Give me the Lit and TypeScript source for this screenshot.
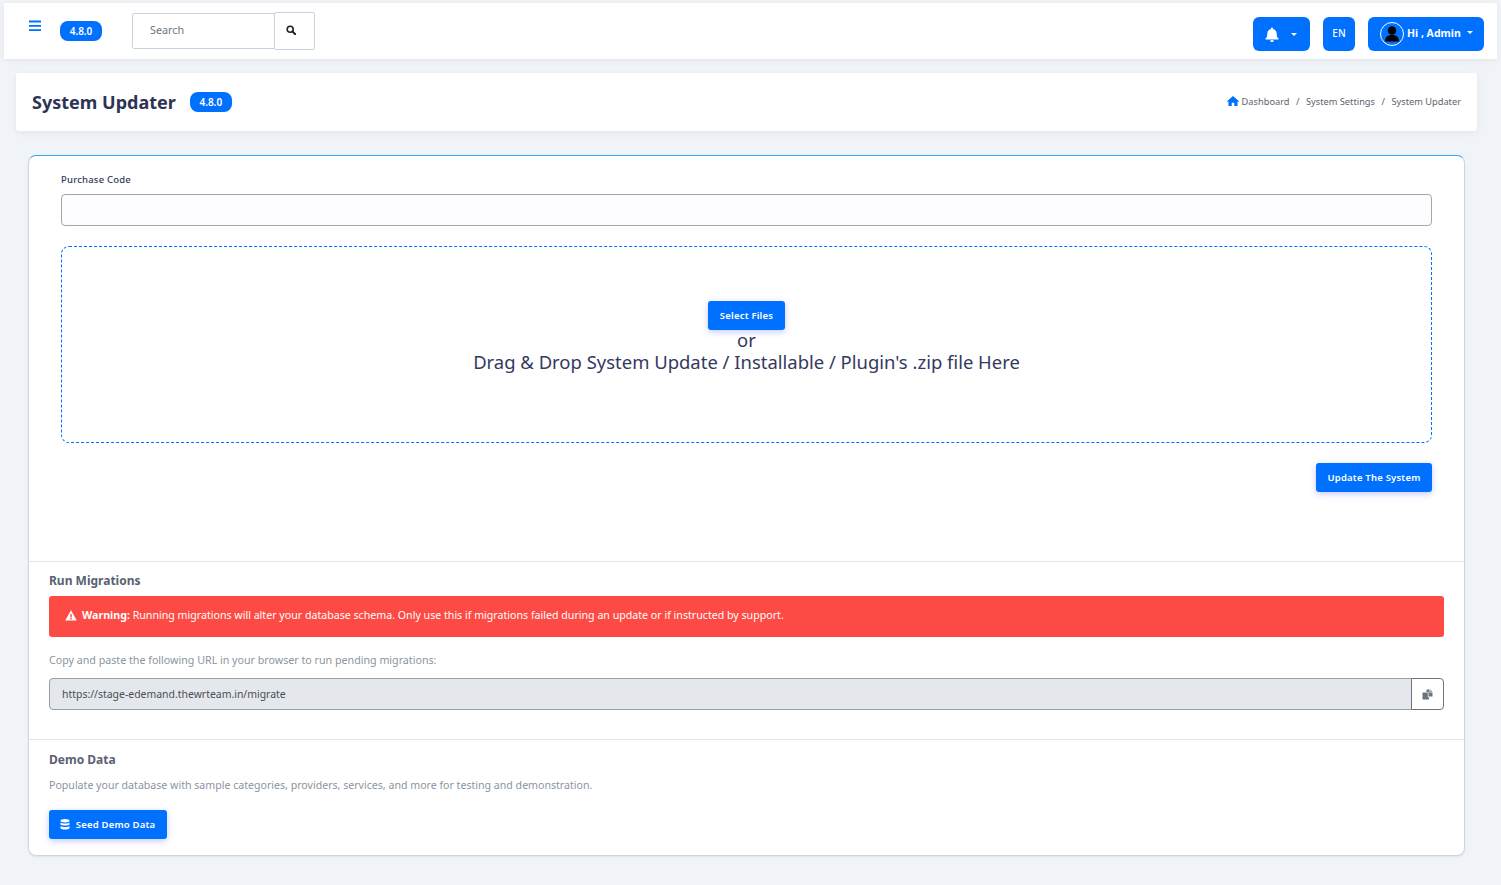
import { LitElement, html, css, svg } from "lit";
import { customElement } from "lit/decorators.js";

const bars = svg`<path d="M0 .6h12v1.800H0zM0 4.900h12v1.800H0zM0 9.200h12v1.800H0z" fill="currentColor"/>`;

@customElement("app-root")
export class AppRoot extends LitElement {
  static styles = css`
    :host { display: block; min-height: 885px; box-sizing: border-box; background: #f0f3f7; padding: 3px 4px 0; font-family: "Noto Sans", "Open Sans", sans-serif; color: #34395e; }
    * { box-sizing: border-box; }
    svg { display: block; }
    .nav { height: 56px; background: #fff; display: flex; box-shadow: 0 1px 6px rgba(30,40,70,.07); padding: 9px 13px 0 25px; align-items: flex-start; }
    .ham { color: #0070ff; width: 12px; height: 12px; margin-top: 8px; }
    .badge { display: inline-flex; align-items: center; justify-content: center; width: 42px; height: 20px; border-radius: 8px; background: #0070ff; color: #fff; font-size: 10px; font-weight: 600; padding-bottom: 1px; }
    .nav .badge { margin: 9px 30px 0 19px; }
    .search { display: flex; align-items: center; }
    .search-in { width: 143px; height: 36px; border: 1px solid #cfd1dc; border-radius: 2px 0 0 2px; padding: 0 0 3px 17px; font-size: 10.800px; color: #6c757d; display: flex; align-items: center; }
    .search-btn { width: 41px; height: 38px; margin-left: -1px; border: 1px solid #cfd1dc; border-radius: 2px; display: flex; align-items: center; justify-content: center; background: #fff; padding: 0 8px 2px 0; }
    .right { margin-left: auto; display: flex; gap: 13px; padding-top: 5px; }
    .nb { height: 34px; border-radius: 6px; background: #0070ff; color: #fff; display: flex; align-items: center; font-size: 10px; font-weight: 500; }
    .bell { width: 57px; padding-left: 12px; }
    .en { width: 32px; justify-content: center; padding-bottom: 2px; }
    .user { width: 116px; padding-left: 12px; font-size: 10.500px; font-weight: 700; }
    .user-name { margin-bottom: 3px; }
    .avatar { width: 24px; height: 24px; border-radius: 50%; border: 1px solid #fff; margin-right: 3px; display: flex; align-items: center; justify-content: center; }
    .caret { width: 0; height: 0; border: 3.500px solid transparent; border-top-color: #fff; border-bottom-width: 0; }
    .bell .caret { margin-left: 12px; }
    .user .caret { margin: 0 0 3px 6px; }
    .wrap { padding: 14px 20px 0 12px; }
    .head { height: 58px; background: #fff; border-radius: 3px; display: flex; align-items: center; padding: 0 16px; box-shadow: 0 2px 6px rgba(30,40,70,.06); }
    h1 { margin: 0 14px 0 0; font-size: 18px; font-weight: 700; color: #2d3354; line-height: 1; }
    .crumbs { margin-left: auto; display: flex; align-items: center; font-size: 9.250px; color: #5d6470; margin-top: -2px; }
    .crumbs svg { margin-right: 3px; }
    .crumbs i { font-style: normal; padding: 0 6.500px; }
    .card { margin: 24px 12px 0 12px; height: 701px; background: #fff; border: 1px solid #d2d4dc; border-top-color: #35aaf2; border-radius: 8px; box-shadow: 0 1px 2px rgba(30,40,70,.08); }
    .top { height: 406px; padding: 18px 32px 0; border-bottom: 1px solid #e3e5e9; display: flex; flex-direction: column; }
    label { font-size: 9.500px; font-weight: 500; color: #34395e; line-height: 12px; height: 20px; letter-spacing: .2px; }
    .field { height: 32px; border: 1px solid #a3a6ab; border-radius: 4px; background: #fdfdff; }
    .drop { margin-top: 20px; height: 197px; border: 1px dashed #0070ff; border-radius: 8px; display: flex; flex-direction: column; align-items: center; padding-top: 54px; font-size: 18.470px; color: #34395e; }
    .or { line-height: 20px; }
    .dd { line-height: 24px; }
    .btn { display: inline-flex; align-items: center; justify-content: center; height: 29px; border-radius: 3px; background: #0070ff; color: #fff; font-size: 9.500px; font-weight: 600; letter-spacing: .2px; box-shadow: 0 2px 6px rgba(60,80,255,.3); }
    .select { width: 77px; }
    .update { width: 116px; align-self: flex-end; margin-top: 20px; }
    .mig { height: 178px; padding: 11px 20px 0; border-bottom: 1px solid #e3e5e9; }
    h2 { margin: 0; font-size: 12px; font-weight: 700; color: #5a6170; line-height: 16px; }
    .alert { margin-top: 7px; height: 41px; background: #fe4a44; color: #fff; border-radius: 3px; display: flex; align-items: center; padding: 0 0 3px 16px; font-size: 10.630px; white-space: pre; }
    .alert svg { margin: 0 5px 0 0; }
    .muted { font-size: 10.600px; color: #8a959f; line-height: 14px; }
    .mig .muted { margin-top: 16px; font-size: 10.680px; }
    .group { margin-top: 11px; height: 32px; display: flex; }
    .url { flex: 1; background: #e4e7ec; border: 1px solid #9a9ea5; border-radius: 4px 0 0 4px; display: flex; align-items: center; padding-left: 12px; font-size: 10.450px; color: #495057; }
    .copy { width: 33px; margin-left: -1px; border: 1px solid #6c757d; border-radius: 0 4px 4px 0; display: flex; align-items: center; justify-content: center; }
    .demo { padding: 12px 20px 0; }
    .demo .muted { margin-top: 10px; }
    .seed { width: 118px; margin-top: 18px; padding-right: 1px; }
    .seed svg { margin-right: 6px; }
  `;

  render() {
    return html`
      <div class="nav">
        <div class="ham"><svg width="12" height="12" viewBox="0 0 12 12">${bars}</svg></div>
        <span class="badge">4.8.0</span>
        <div class="search">
          <div class="search-in">Search</div>
          <div class="search-btn"><svg width="10" height="10" viewBox="0 0 10 10"><circle cx="4.200" cy="4.200" r="3" fill="none" stroke="#222" stroke-width="1.600"/><path d="M6.400 6.400L9.200 9.200" stroke="#222" stroke-width="2" stroke-linecap="round"/></svg></div>
        </div>
        <div class="right">
          <div class="nb bell">
            <svg width="14" height="15" viewBox="0 0 14 15"><path d="M7 .5c.6 0 1 .4 1 1v.6c2.300.5 3.700 2.400 3.700 4.600 0 3 .9 3.900 1.800 4.900.3.400 0 .9-.5.900H1c-.5 0-.8-.5-.5-.9.9-1 1.800-1.900 1.800-4.900C2.300 4.500 3.700 2.600 6 2.100v-.6c0-.6.400-1 1-1zM5.200 13.200h3.600C8.800 14.200 8 15 7 15s-1.800-.8-1.800-1.800z" fill="#fff"/></svg>
            <span class="caret"></span>
          </div>
          <div class="nb en">EN</div>
          <div class="nb user">
            <span class="avatar"><svg width="14" height="16" viewBox="0 0 14 16"><circle cx="7" cy="4.500" r="4.300" fill="#000"/><path d="M0 15.500c0-4.500 2.500-6.500 7-6.500s7 2 7 6.500z" fill="#000"/></svg></span>
            <span class="user-name">Hi , Admin</span>
            <span class="caret"></span>
          </div>
        </div>
      </div>
      <div class="wrap">
        <div class="head">
          <h1>System Updater</h1>
          <span class="badge">4.8.0</span>
          <div class="crumbs">
            <svg width="12" height="10" viewBox="0 0 12 10"><path d="M6 0l6 5.200-.7.800L10.500 5.300V10H7.300V6.800H4.700V10H1.500V5.300L.7 6 0 5.200z" fill="#0070ff"/></svg>
            Dashboard<i>/</i>System Settings<i>/</i>System Updater
          </div>
        </div>
        <div class="card">
          <div class="top">
            <label>Purchase Code</label>
            <div class="field"></div>
            <div class="drop">
              <span class="btn select">Select Files</span>
              <span class="or">or</span>
              <span class="dd">Drag &amp; Drop System Update / Installable / Plugin's .zip file Here</span>
            </div>
            <span class="btn update">Update The System</span>
          </div>
          <div class="mig">
            <h2>Run Migrations</h2>
            <div class="alert"><svg width="12" height="11" viewBox="0 0 12 11"><path d="M6 .3l5.800 10.200H.2zM5.300 4v3.400h1.400V4zM5.300 8.100v1.300h1.400V8.100z" fill="#fff" fill-rule="evenodd"/></svg><b>Warning:</b> Running migrations will alter your database schema. Only use this if migrations failed during an update or if instructed by support.</div>
            <div class="muted">Copy and paste the following URL in your browser to run pending migrations:</div>
            <div class="group">
              <div class="url">https://stage-edemand.thewrteam.in/migrate</div>
              <div class="copy"><svg width="11" height="11" viewBox="0 0 11 11"><path d="M4.500 .5H7.500V3.500H10.500V7.500H6.500V3H4.500z" fill="#6c757d"/><path d="M8.300 .6L10.400 2.700H8.300z" fill="#6c757d"/><path d="M.5 3.500H5.800V8.200H7V10.500H.5z" fill="#6c757d"/></svg></div>
            </div>
          </div>
          <div class="demo">
            <h2>Demo Data</h2>
            <div class="muted">Populate your database with sample categories, providers, services, and more for testing and demonstration.</div>
            <span class="btn seed">
              <svg width="10" height="11" viewBox="0 0 10 11"><ellipse cx="5" cy="1.800" rx="4.500" ry="1.700" fill="#fff"/><path d="M.5 3.500c1 1.300 8 1.300 9 0v2c-1 1.300-8 1.300-9 0zM.5 6.900c1 1.300 8 1.300 9 0v2.300c-.5 1.800-8.500 1.800-9 0z" fill="#fff"/></svg>
              Seed Demo Data
            </span>
          </div>
        </div>
      </div>
    `;
  }
}
